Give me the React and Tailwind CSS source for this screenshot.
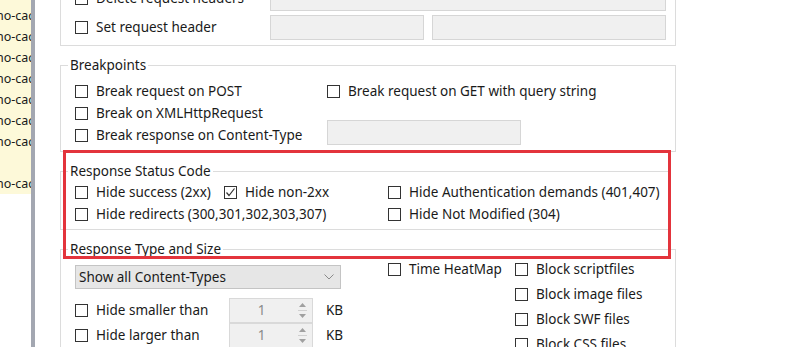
import React from "react";

const Box = ({ checked }) => (
  <span className="w-[13px] h-[13px] border border-[#333333] bg-white shrink-0 flex items-center justify-center">
    {checked && (
      <svg width="11" height="11" viewBox="0 0 11 11">
        <polyline points="1.5,5.5 4,8.5 9.5,1.5" fill="none" stroke="#333333" strokeWidth="1.2" />
      </svg>
    )}
  </span>
);

const Check = ({ label, checked, h = "h-[22px]" }) => (
  <div className={"flex items-center gap-[8px] whitespace-nowrap " + h}>
    <Box checked={checked} />
    <span>{label}</span>
  </div>
);

const Spinner = () => (
  <div className="w-[84px] h-[25px] border border-[#d9d9d9] bg-[#f0f0f0] flex">
    <div className="flex-1 flex items-center justify-center text-[#8a8a8a]">1</div>
    <div className="w-[19px] flex flex-col items-center justify-center gap-[3px]">
      <svg width="7" height="4" viewBox="0 0 7 4">
        <polygon points="0,4 3.5,0 7,4" fill="#a0a0a0" />
      </svg>
      <div className="w-[9px] h-px bg-[#d0d0d0]" />
      <svg width="7" height="4" viewBox="0 0 7 4">
        <polygon points="0,0 3.5,4 7,0" fill="#a0a0a0" />
      </svg>
    </div>
  </div>
);

export default function App() {
  const rows = ["no-cache", "no-cache", "no-cache", "no-cache", "no-cache", "no-cache", "no-cache", "", "no-cache"];
  return (
    <div className="relative w-[795px] h-[347px] overflow-hidden bg-white flex font-['Noto_Sans',sans-serif] text-[13.5px] text-[#1a1a1a]">
      <div className="w-[31px] shrink-0 overflow-hidden">
        <div className="bg-[#fdf9d9] pt-[5px] h-[194px]">
          {rows.map((r, i) => (
            <div key={i} className="h-[21px] leading-[21px] whitespace-nowrap ml-[-4px] text-[12.5px]">
              {r}
            </div>
          ))}
        </div>
      </div>
      <div className="w-[4px] shrink-0 bg-[#a3a7b1]" />
      <div className="flex-1 pl-[25px]">
        {/* top group */}
        <div className="-mt-[20px] w-[616px] border border-[#dcdcdc] pt-[5px] pb-[5px] pl-[14px] pr-[9px] grid grid-cols-[195px_1fr] gap-y-[4px]">
          <Check label="Delete request headers" h="h-[25px]" />
          <div className="h-[25px] bg-[#f0f0f0] border border-[#d6d6d6]" />
          <Check label="Set request header" h="h-[25px]" />
          <div className="flex gap-[8px]">
            <div className="w-[154px] h-[25px] bg-[#f0f0f0] border border-[#d6d6d6]" />
            <div className="flex-1 h-[25px] bg-[#f0f0f0] border border-[#d6d6d6]" />
          </div>
        </div>

        {/* Breakpoints */}
        <fieldset className="mt-[11px] w-[616px] border border-[#dcdcdc] pl-[7px] pr-[9px] pb-[5px]">
          <legend className="px-[2px] leading-[16px]">Breakpoints</legend>
          <div className="pl-[7px] pt-[7px] grid grid-cols-[252px_1fr]">
            <Check label="Break request on POST" />
            <Check label="Break request on GET with query string" />
            <Check label="Break on XMLHttpRequest" />
            <div />
            <Check label="Break response on Content-Type" />
            <div className="flex items-center h-[22px]">
              <div className="w-[194px] h-[25px] mb-[5px] bg-[#f0f0f0] border border-[#d6d6d6]" />
            </div>
          </div>
        </fieldset>

        {/* Response Status Code */}
        <fieldset className="mt-[11px] w-[609px] border border-[#dcdcdc] pl-[7px] pr-[4px] pb-[4px]">
          <legend className="px-[2px] leading-[16px]">Response Status Code</legend>
          <div className="pl-[7px] pt-[2px] grid grid-cols-[149px_164px_1fr]">
            <Check label="Hide success (2xx)" />
            <Check label="Hide non-2xx" checked />
            <Check label="Hide Authentication demands (401,407)" />
            <div className="col-span-2">
              <Check label="Hide redirects (300,301,302,303,307)" />
            </div>
            <Check label="Hide Not Modified (304)" />
          </div>
        </fieldset>

        {/* Response Type and Size */}
        <fieldset className="mt-[11px] w-[616px] h-[140px] border border-[#dcdcdc] pl-[7px] pr-[9px]">
          <legend className="px-[2px] leading-[16px]">Response Type and Size</legend>
          <div className="pl-[7px] flex">
            <div className="w-[313px] pt-[8px] flex flex-col">
              <div className="w-[266px] h-[24px] bg-[#e6e6e6] border border-[#c4c4c4] flex items-center justify-between pl-[3px] pr-[6px]">
                <span>Show all Content-Types</span>
                <svg width="10" height="6" viewBox="0 0 10 6">
                  <polyline points="0.5,0.5 5,5 9.5,0.5" fill="none" stroke="#8a8a8a" strokeWidth="1" />
                </svg>
              </div>
              <div className="mt-[9px] flex items-center h-[25px]">
                <div className="w-[154px]">
                  <Check label="Hide smaller than" />
                </div>
                <Spinner />
                <span className="ml-[13px]">KB</span>
              </div>
              <div className="flex items-center h-[25px]">
                <div className="w-[154px]">
                  <Check label="Hide larger than" />
                </div>
                <Spinner />
                <span className="ml-[13px]">KB</span>
              </div>
            </div>
            <div className="w-[127px]">
              <Check label="Time HeatMap" h="h-[25px]" />
            </div>
            <div className="flex flex-col">
              <Check label="Block scriptfiles" h="h-[25px]" />
              <Check label="Block image files" h="h-[25px]" />
              <Check label="Block SWF files" h="h-[25px]" />
              <Check label="Block CSS files" h="h-[25px]" />
            </div>
          </div>
        </fieldset>
      </div>

      {/* annotation */}
      <div className="absolute left-[63px] top-[150px] w-[608px] h-[109px] border-[3px] border-[#e3343c]" />
    </div>
  );
}
